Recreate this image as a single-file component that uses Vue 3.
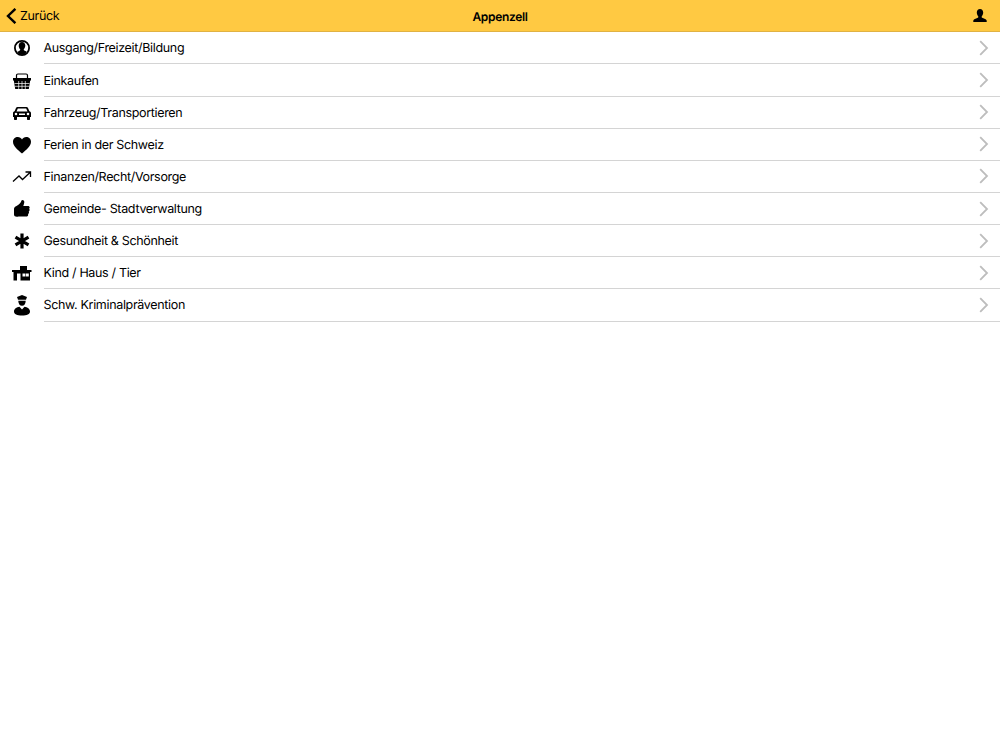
<script setup>
const rows = [
  { label: 'Ausgang/Freizeit/Bildung', icon: 'person' },
  { label: 'Einkaufen', icon: 'basket' },
  { label: 'Fahrzeug/Transportieren', icon: 'car' },
  { label: 'Ferien in der Schweiz', icon: 'heart' },
  { label: 'Finanzen/Recht/Vorsorge', icon: 'trend' },
  { label: 'Gemeinde- Stadtverwaltung', icon: 'thumb' },
  { label: 'Gesundheit & Schönheit', icon: 'star' },
  { label: 'Kind / Haus / Tier', icon: 'house' },
  { label: 'Schw. Kriminalprävention', icon: 'police' },
]
</script>

<template>
  <div class="page">
    <header class="bar">
      <div class="back">
        <svg class="back-icon" width="11" height="16" viewBox="0 0 11 16"><path d="M9.400.8 2 8l7.400 7.200" fill="none" stroke="#000" stroke-width="2.400"/></svg>
        <span class="back-text">Zurück</span>
      </div>
      <div class="title">Appenzell</div>
      <svg class="user" width="14" height="13" viewBox="0 0 14 13"><path d="M7 0c2 0 3.200 1.500 3.200 3.600 0 1.500-.6 2.800-1.400 3.600-.3.900 0 1.500 1 1.900 1.500.6 3.200 1.100 3.900 2.400V13H.3v-1.500c.7-1.300 2.400-1.800 3.900-2.400 1-.4 1.300-1 1-1.900C4.400 6.400 3.800 5.100 3.800 3.600 3.800 1.500 5 0 7 0z" fill="#000"/></svg>
    </header>
    <ul class="list">
      <li v-for="row in rows" :key="row.label" class="row">
        <span class="icon">
          <svg width="20" height="22" viewBox="0 -1 20 22">
            <g v-if="row.icon === 'person'">
              <circle cx="10" cy="10" r="7.100" fill="none" stroke="#000" stroke-width="1.800"/>
              <path d="M10 4c2 0 3.300 1.500 3.300 3.600 0 1.500-.7 2.900-1.500 3.600-.2.800.2 1.300 1.100 1.600.8.300 1.500.6 2 1.200A7 7 0 0 1 10 17a7 7 0 0 1-4.900-2.900c.5-.6 1.200-.9 2-1.200.9-.3 1.300-.8 1.100-1.600-.8-.7-1.500-2.100-1.500-3.600C6.700 5.500 8 4 10 4z" fill="#000"/>
            </g>
            <g v-else-if="row.icon === 'basket'">
              <path d="M4.500 8V4.500C4.500 3.700 5.100 3 5.900 3h8.200c.8 0 1.400.7 1.400 1.500V8" fill="none" stroke="#000" stroke-width="1.200"/>
              <path d="M1 7h18v2.500h-.8l-1.400 8.500H3.200L1.800 9.500H1z" fill="#000"/>
              <path d="M6.700 10v8M10 10v8M13.300 10v8M2.500 12.500h15M2.500 15.300h15" stroke="#fff" stroke-width=".7"/>
            </g>
            <g v-else-if="row.icon === 'car'">
              <path fill-rule="evenodd" d="M5.500 4h9c.7 0 1.200.4 1.500 1l1.400 3.200c1 .3 1.600 1 1.600 2v3.800h-1v2.300c0 .4-.3.700-.7.700h-1.600c-.4 0-.7-.3-.7-.7V14H5v2.300c0 .4-.3.700-.7.700H2.700c-.4 0-.7-.3-.7-.7V14H1v-3.800c0-1 .6-1.700 1.600-2L4 5c.3-.6.800-1 1.500-1zM5.800 5.600 4.500 8.400h11L14.200 5.600zM4 9.700a1.300 1.300 0 1 0 0 2.600 1.300 1.300 0 0 0 0-2.600zm12 0a1.300 1.300 0 1 0 0 2.600 1.300 1.300 0 0 0 0-2.600zM7 10.500v1.400h6v-1.400z" fill="#000"/>
            </g>
            <path v-else-if="row.icon === 'heart'" d="M10 18.500C6 15 1 11.500 1 6.800 1 3.900 3.200 2 5.800 2c1.800 0 3.400.9 4.200 2.500C10.800 2.900 12.400 2 14.200 2 16.800 2 19 3.900 19 6.800c0 4.700-5 8.200-9 11.700z" fill="#000"/>
            <path v-else-if="row.icon === 'trend'" d="M1 14.500 7 9l3.500 3.500L18 5.500M13.500 5H18.500V10" fill="none" stroke="#000" stroke-width="1.300"/>
            <path v-else-if="row.icon === 'thumb'" d="M10.500 1c1.300 0 1.800 1 1.800 2.200 0 1.200-.6 2.500-1 3.700H16c1 0 1.700.7 1.700 1.600 0 .6-.3 1-.6 1.300.4.400.5.800.5 1.200 0 .7-.4 1.200-.9 1.500.2.300.3.600.3 1 0 .7-.4 1.200-1 1.400.1.300.2.500.2.800 0 1-.8 1.800-1.800 1.800H6.500C4 18 2 17.500 2 15.500V10c0-1.500 1-2.300 2.500-3 2-1 4.500-3 5-5.500.1-.2.400-.5 1-.5z" fill="#000"/>
            <path v-else-if="row.icon === 'star'" d="M10 2.500v15M3.500 6.200l13 7.600M16.500 6.200l-13 7.600" fill="none" stroke="#000" stroke-width="3.200"/>
            <path v-else-if="row.icon === 'house'" fill-rule="evenodd" d="M8 3H15V7H19.500V9H18V17.500H1.500V9H0V7H8zM5 10.500V17.500H8.500V10.500zM10.500 10.500V13.500H13.500V10.500zM14 10.500V13.500H16.800V10.500z" fill="#000"/>
            <g v-else>
              <path d="M5 2 10 0l5 2-1 2.800H6z" fill="#000"/>
              <path d="M6.300 5.700h7.400c0 2.900-1.500 5.100-3.700 5.100S6.300 8.600 6.300 5.700z" fill="#000"/>
              <path d="M7.500 11.800 10 14.500l2.500-2.700c3 .5 5.500 2 5.500 4.700 0 2.700-3 4-8 4s-8-1.300-8-4c0-2.700 2.500-4.200 5.500-4.700z" fill="#000"/>
            </g>
          </svg>
        </span>
        <span class="cell">
          <span class="label">{{ row.label }}</span>
          <svg class="chev" width="10" height="16" viewBox="0 0 10 16"><path d="M1.200 1.200 8 8l-6.800 6.800" fill="none" stroke="#bdbdbd" stroke-width="1.800"/></svg>
        </span>
      </li>
    </ul>
  </div>
</template>

<style scoped>
.page {
  width: 1000px;
  height: 750px;
  background: #fff;
  font-family: Inter, "Liberation Sans", sans-serif;
  letter-spacing: -0.33px;
  text-rendering: geometricPrecision;
  color: #000;
  overflow: hidden;
}
.bar {
  height: 32px;
  box-sizing: border-box;
  background: #ffc942;
  border-bottom: 1px solid #e0b244;
  display: flex;
  align-items: center;
  justify-content: space-between;
  padding: 0 13px 0 6px;
  position: relative;
}
.back {
  display: flex;
  align-items: center;
  gap: 3px;
  font-size: 12.500px;
}
.back-text {
  padding-top: 2px;
}
.title {
  position: absolute;
  left: 0;
  right: 0;
  text-align: center;
  font-size: 12px;
  font-weight: 600;
  padding-top: 1px;
}
.list {
  list-style: none;
  margin: 0;
  padding: 0.300px 0 0;
}
.row {
  height: 32.150px;
  display: flex;
  align-items: stretch;
}
.icon {
  width: 43.500px;
  padding-left: 12px;
  box-sizing: border-box;
  display: flex;
  align-items: center;
}
.cell {
  flex: 1;
  display: flex;
  align-items: center;
  justify-content: space-between;
  border-bottom: 1px solid #d4d4d4;
  padding-right: 11px;
}
.label {
  font-size: 12.500px;
  padding-top: 2px;
}
</style>
